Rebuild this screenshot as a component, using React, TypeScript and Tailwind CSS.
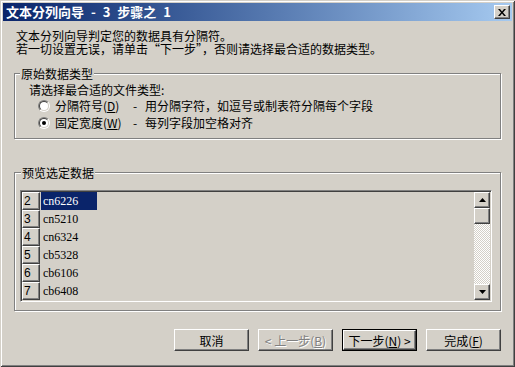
import React from 'react';

const raised =
  'border border-t-white border-l-white border-r-[#404040] border-b-[#404040] shadow-[inset_-1px_-1px_0_#808080]';
const groupBox =
  'relative border border-[#808080] shadow-[inset_1px_1px_0_#fff,1px_1px_0_#fff]';

function Radio({ checked }: { checked?: boolean }) {
  return (
    <div className="w-[12px] h-[12px] shrink-0 rounded-full border border-t-[#808080] border-l-[#808080] border-r-white border-b-white">
      <div className="w-full h-full rounded-full border border-t-[#404040] border-l-[#404040] border-r-[#d4d0c8] border-b-[#d4d0c8] bg-white flex items-center justify-center">
        {checked && <div className="w-[4px] h-[4px] rounded-full bg-black" />}
      </div>
    </div>
  );
}

function Arrow({ down }: { down?: boolean }) {
  return (
    <svg width="7" height="4" viewBox="0 0 7 4">
      {down ? <path d="M0 0h7L3.5 4z" fill="#000" /> : <path d="M0 4h7L3.5 0z" fill="#000" />}
    </svg>
  );
}

function Button({
  children,
  disabled,
  primary,
}: {
  children: React.ReactNode;
  disabled?: boolean;
  primary?: boolean;
}) {
  const inner = (
    <div
      className={`w-full h-full flex items-center justify-center ${raised} ${
        disabled ? 'text-[#808080] [text-shadow:1px_1px_0_#fff]' : 'text-black'
      }`}
    >
      {children}
    </div>
  );
  if (primary) {
    return <div className="w-[75px] h-[22px] border border-black">{inner}</div>;
  }
  return <div className="w-[75px] h-[22px]">{inner}</div>;
}

const rows = [
  ['2', 'cn6226'],
  ['3', 'cn5210'],
  ['4', 'cn6324'],
  ['5', 'cb5328'],
  ['6', 'cb6106'],
  ['7', 'cb6408'],
  ['', ''],
];

export default function App() {
  return (
    <div className="w-[515px] h-[367px] bg-[#d4d0c8] p-[3px] flex flex-col overflow-hidden shadow-[inset_1px_1px_0_#d4d0c8,inset_-1px_-1px_0_#404040,inset_2px_2px_0_#fff,inset_-2px_-2px_0_#808080] text-[12px] leading-[13px] text-black font-['Noto_Sans_CJK_SC',sans-serif]">
      {/* title bar */}
      <div className="h-[18px] flex items-center justify-between pl-[3px] pr-[2px] bg-linear-to-r from-[#0a246a] to-[#a6caf0]">
        <span className="text-white font-bold text-[13px] leading-[18px] whitespace-pre [word-spacing:4px]">
          文本分列向导 - 3 步骤之 1
        </span>
        <div className={`w-[16px] h-[14px] bg-[#d4d0c8] flex items-center justify-center ${raised}`}>
          <svg width="8" height="7" viewBox="0 0 8 7">
            <path d="M0 0h2l2 2.5L6 0h2L5 3.5 8 7H6L4 4.5 2 7H0l3-3.5z" fill="#000" />
          </svg>
        </div>
      </div>

      <div className="flex flex-col px-[11px]">
        <div className="mt-[8px] ml-[2px]">
          <p className="h-[13px]">文本分列向导判定您的数据具有分隔符。</p>
          <p className="h-[13px]">若一切设置无误，请单击“下一步”，否则请选择最合适的数据类型。</p>
        </div>

        {/* original data type */}
        <div className={`mt-[18px] h-[66px] ${groupBox}`}>
          <span className="absolute top-[-7px] left-[5px] px-[1px] bg-[#d4d0c8]">原始数据类型</span>
          <div className="pt-[9px] pl-[14px]">
            <p>请选择最合适的文件类型:</p>
            <div className="mt-[3px] flex flex-col gap-[4px] pl-[9px]">
              <div className="flex items-center h-[13px]">
                <Radio />
                <span className="ml-[5px] w-[78px]">
                  分隔符号(<u>D</u>)
                </span>
                <span className="w-[12px]">-</span>
                <span>用分隔字符，如逗号或制表符分隔每个字段</span>
              </div>
              <div className="flex items-center h-[13px]">
                <Radio checked />
                <span className="ml-[5px] w-[78px]">
                  固定宽度(<u>W</u>)
                </span>
                <span className="w-[12px]">-</span>
                <span>每列字段加空格对齐</span>
              </div>
            </div>
          </div>
        </div>

        {/* preview */}
        <div className={`mt-[33px] h-[139px] ${groupBox}`}>
          <span className="absolute top-[-7px] left-[6px] px-[1px] bg-[#d4d0c8]">预览选定数据</span>
          <div className="mt-[17px] ml-[5px] w-[472px] h-[112px] p-[1px] flex border border-t-[#808080] border-l-[#808080] border-r-white border-b-white shadow-[inset_1px_1px_0_#404040,inset_-1px_-1px_0_#d4d0c8]">
            <div className="flex-1 overflow-hidden">
              {rows.map(([n, v], i) => (
                <div key={i} className="flex h-[18px]">
                  <div
                    className={`w-[18px] h-[18px] pl-[1px] flex items-center bg-[#d4d0c8] font-['Liberation_Sans',sans-serif] text-[12px] ${raised}`}
                  >
                    {n}
                  </div>
                  <div
                    className={`ml-[1px] w-[56px] h-[18px] pl-[2px] flex items-center font-['Liberation_Serif',serif] text-[12px] ${
                      i === 0 ? 'bg-[#0a246a] text-white' : ''
                    }`}
                  >
                    {v}
                  </div>
                </div>
              ))}
            </div>
            {/* scrollbar */}
            <div className="w-[16px] flex flex-col">
              <div className={`h-[16px] flex items-center justify-center bg-[#d4d0c8] ${raised}`}>
                <Arrow />
              </div>
              <div className={`h-[16px] bg-[#d4d0c8] ${raised}`} />
              <div className="flex-1 [background-image:repeating-conic-gradient(#fff_0_25%,#d4d0c8_0_50%)] [background-size:2px_2px]" />
              <div className={`h-[16px] flex items-center justify-center bg-[#d4d0c8] ${raised}`}>
                <Arrow down />
              </div>
            </div>
          </div>
        </div>

        {/* buttons */}
        <div className="mt-[18px] flex justify-end gap-[9px]">
          <Button>取消</Button>
          <Button disabled>
            &lt; 上一步(<u>B</u>)
          </Button>
          <Button primary>
            下一步(<u>N</u>) &gt;
          </Button>
          <Button>
            完成(<u>F</u>)
          </Button>
        </div>
      </div>
    </div>
  );
}
